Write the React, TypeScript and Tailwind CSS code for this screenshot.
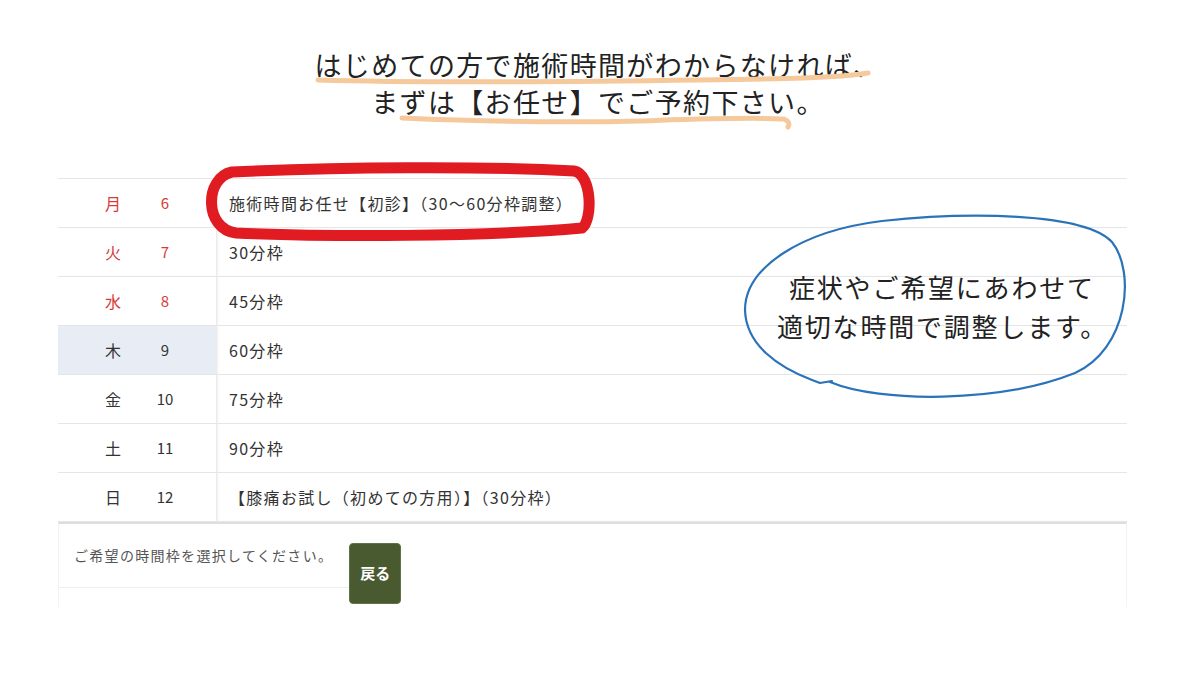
import React from 'react';

const FONT = '"Noto Sans CJK JP", "Noto Sans", sans-serif';

interface SlotRow {
  day: string;
  date: string;
  label: string;
  holiday?: boolean;
  today?: boolean;
}

const ROWS: SlotRow[] = [
  { day: '月', date: '6', label: '施術時間お任せ【初診】（30〜60分枠調整）', holiday: true },
  { day: '火', date: '7', label: '30分枠', holiday: true },
  { day: '水', date: '8', label: '45分枠', holiday: true },
  { day: '木', date: '9', label: '60分枠', today: true },
  { day: '金', date: '10', label: '75分枠' },
  { day: '土', date: '11', label: '90分枠' },
  { day: '日', date: '12', label: '【膝痛お試し（初めての方用）】（30分枠）' },
];

function Overlay() {
  return (
    <svg
      className="absolute left-0 top-0 pointer-events-none"
      width="1200"
      height="675"
      viewBox="0 0 1200 675"
      fill="none"
    >
      {/* マーカー下線 */}
      <path
        d="M318 80 C420 83 560 82 700 80 C780 79 840 78 868 73"
        stroke="#f5c99c"
        strokeWidth="5"
        strokeLinecap="round"
      />
      <path
        d="M402 118 C470 121 560 123 640 121 C700 119 750 117 784 119 Q791 122 788 127"
        stroke="#f5c99c"
        strokeWidth="5"
        strokeLinecap="round"
      />
      {/* 赤丸 */}
      <path
        d="M232 172 C340 167 480 166 574 171 C592 174 593 220 582 228 C480 237 330 237 236 233 C204 229 204 178 232 172 Z"
        stroke="#e01b22"
        strokeWidth="11"
        strokeLinejoin="round"
      />
      {/* 吹き出し */}
      <path
        d="M830 382 C880 403 1000 403 1075 373 C1128 349 1136 272 1112 242 C1084 212 965 212 882 221 C800 231 745 268 745 310 C746 345 778 367 812 380 L820 383 L832 381"
        stroke="#2b73b9"
        strokeWidth="2.2"
        strokeLinejoin="round"
        strokeLinecap="round"
      />
    </svg>
  );
}

export default function App() {
  return (
    <div
      className="relative w-[1200px] h-[675px] bg-white overflow-hidden text-[#333]"
      style={{ fontFamily: FONT }}
    >
      {/* 見出し */}
      <div className="flex flex-col items-center pt-[46px] pr-[4px] text-[27px] leading-[37px] tracking-[1.35px] text-[#222]">
        <p>はじめての方で施術時間がわからなければ、</p>
        <p>まずは【お任せ】でご予約下さい。</p>
      </div>

      {/* 時間枠テーブル */}
      <div className="ml-[58px] w-[1069px] mt-[58px] border-t border-[#e6e6e6]">
        {ROWS.map((r) => (
          <div key={r.day} className="flex h-[49px] border-b border-[#e6e6e6]">
            <div
              className={`flex w-[158px] items-center text-[15px] ${
                r.today ? 'bg-[#e8edf5]' : ''
              } ${r.holiday ? 'text-[#d63b36]' : 'text-[#333]'}`}
            >
              <span className="ml-[40px] w-[30px] text-center text-[16px]">{r.day}</span>
              <span className="ml-[22px] w-[30px] text-center">{r.date}</span>
            </div>
            <div className="flex flex-1 items-center pl-[13px] text-[16px] tracking-[1.3px] shadow-[inset_3px_0_3px_-2px_rgba(0,0,0,0.12)]">
              {r.label}
            </div>
          </div>
        ))}
      </div>

      {/* フッター */}
      <div className="ml-[58px] w-[1069px] flex h-[85px] items-start border-t-2 border-x border-t-[#dedede] border-x-[#f3f3f3]">
        <div className="flex h-[64px] items-center border-b border-[#efefef] pl-[15px] pr-[16px] text-[14px] tracking-[1.3px] text-[#555]">
          ご希望の時間枠を選択してください。
        </div>
        <button className="mt-[19px] flex h-[61px] w-[52px] items-center justify-center rounded-[4px] border border-[#5f7444] bg-[#4a5a30] text-[15px] font-bold text-white">
          戻る
        </button>
      </div>

      {/* 吹き出しテキスト */}
      <div className="absolute left-[777px] top-[267px] text-[26px] leading-[39px] tracking-[1.8px] text-[#222]">
        <p className="pl-[12px]">症状やご希望にあわせて</p>
        <p>適切な時間で調整します。</p>
      </div>

      <Overlay />
    </div>
  );
}
